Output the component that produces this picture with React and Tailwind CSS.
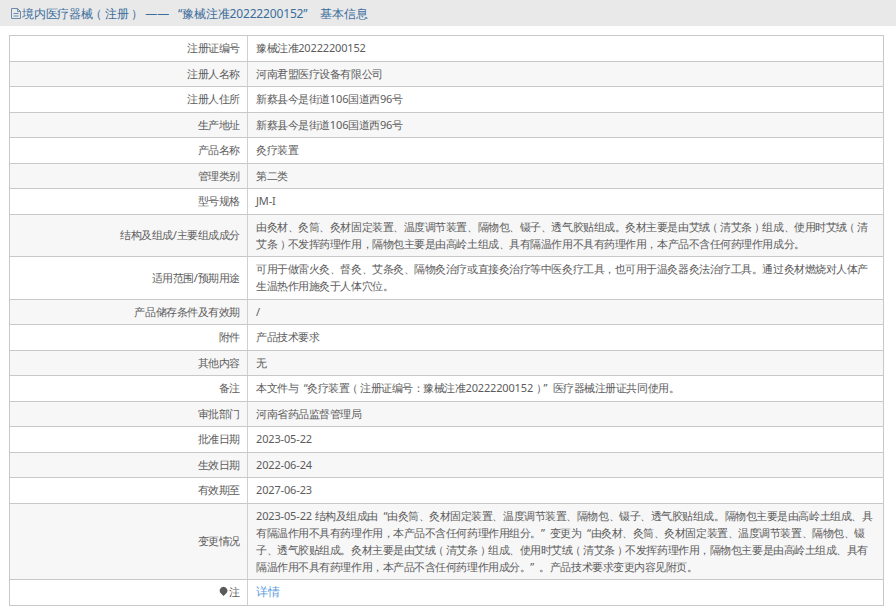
import React from 'react';

const rows = [
  ['注册证编号', ['豫械注准20222200152']],
  ['注册人名称', ['河南君盟医疗设备有限公司']],
  ['注册人住所', ['新蔡县今是街道106国道西96号']],
  ['生产地址', ['新蔡县今是街道106国道西96号']],
  ['产品名称', ['灸疗装置']],
  ['管理类别', ['第二类']],
  ['型号规格', ['JM-I']],
  ['结构及组成/主要组成成分', [
    '由灸材、灸筒、灸材固定装置、温度调节装置、隔物包、镊子、透气胶贴组成。灸材主要是由艾绒（清艾条）组成、使用时艾绒（清',
    '艾条）不发挥药理作用，隔物包主要是由高岭土组成、具有隔温作用不具有药理作用，本产品不含任何药理作用成分。',
  ]],
  ['适用范围/预期用途', [
    '可用于做雷火灸、督灸、艾条灸、隔物灸治疗或直接灸治疗等中医灸疗工具，也可用于温灸器灸法治疗工具。通过灸材燃烧对人体产',
    '生温热作用施灸于人体穴位。',
  ]],
  ['产品储存条件及有效期', ['/']],
  ['附件', ['产品技术要求']],
  ['其他内容', ['无']],
  ['备注', ['本文件与“灸疗装置（注册证编号：豫械注准20222200152）”医疗器械注册证共同使用。']],
  ['审批部门', ['河南省药品监督管理局']],
  ['批准日期', ['2023-05-22']],
  ['生效日期', ['2022-06-24']],
  ['有效期至', ['2027-06-23']],
  ['变更情况', [
    '2023-05-22 结构及组成由“由灸筒、灸材固定装置、温度调节装置、隔物包、镊子、透气胶贴组成。隔物包主要是由高岭土组成、具',
    '有隔温作用不具有药理作用，本产品不含任何药理作用组分。”变更为“由灸材、灸筒、灸材固定装置、温度调节装置、隔物包、镊',
    '子、透气胶贴组成。灸材主要是由艾绒（清艾条）组成、使用时艾绒（清艾条）不发挥药理作用，隔物包主要是由高岭土组成、具有',
    '隔温作用不具有药理作用，本产品不含任何药理作用成分。”。产品技术要求变更内容见附页。',
  ]],
];

// latin runs use a wider face; brackets, commas and quotes sit in a full box like the original
const Txt = ({ children, spacing = '-tracking-[0.45px]' }) =>
  children.split(/([\x20-\x7e]+|[（），“”])/).filter(Boolean).map((part, i) => {
    if (/^[\x20-\x7e]/.test(part)) {
      return <span key={i} className="font-['Open_Sans',sans-serif] tracking-[-0.15px] whitespace-pre">{part}</span>;
    }
    if (part === '（') return <span key={i} className={`inline-block -ml-[0.23em] mr-[0.23em] ${spacing}`}>{part}</span>;
    if (part === '）') return <span key={i} className={`inline-block ml-[0.23em] -mr-[0.23em] ${spacing}`}>{part}</span>;
    if (part === '，') return <span key={i} className={`font-['Noto_Sans_CJK_TC',sans-serif] ${spacing}`}>{part}</span>;
    if (part === '“') return <span key={i} className={`pl-[0.5em] ${spacing}`}>{part}</span>;
    if (part === '”') return <span key={i} className={`pr-[0.5em] ${spacing}`}>{part}</span>;
    return <span key={i} className={spacing}>{part}</span>;
  });

const Row = ({ label, shaded, children }) => (
  <div className={`flex border-b border-[#c8c8c8] ${shaded ? 'bg-[#f7f7f7]' : 'bg-white'}`}>
    <div className="w-[238px] shrink-0 flex items-center justify-end pr-[7px] pt-[3.25px] pb-[4.25px] border-r border-[#d0d0d0]">
      {label}
    </div>
    <div className="flex-1 pl-[8px] pt-[3.25px] pb-[4.25px] flex flex-col justify-center">{children}</div>
  </div>
);

export default function App() {
  return (
    <div className="w-[896px] h-[612px] overflow-hidden bg-white text-[11px] leading-[17px] text-[#5c5c5c] font-['Noto_Sans_CJK_SC',sans-serif]">
      <div className="h-[26px] bg-[#e9e9e9] flex items-center pl-[10px] text-[12px] text-[#3a6d9c]">
        <svg width="12" height="13" viewBox="0 0 12 13" fill="none" stroke="#6b8cab" strokeWidth="1" className="shrink-0">
          <path d="M1.5 1.5h6l3 3v7h-9z" />
          <path d="M7.5 1.5v3h3M3.5 6.5h5M3.5 9h5" />
        </svg>
        <span className="whitespace-nowrap">
          <Txt spacing="-tracking-[0.17px]">境内医疗器械（注册）</Txt>
          <span className="ml-[5px] mr-[3px] -tracking-[0.17px]">——</span>
          <Txt spacing="-tracking-[0.17px]">“豫械注准20222200152”</Txt>
          <span className="ml-[7px]">
            <Txt spacing="-tracking-[0.17px]">基本信息</Txt>
          </span>
        </span>
      </div>
      <div className="mt-[9px] ml-[9px] w-[875px] border-t border-l border-r border-[#c8c8c8]">
        {rows.map(([label, lines], i) => (
          <Row key={label} label={<Txt>{label}</Txt>} shaded={i % 2 === 1}>
            {lines.map((l) => (
              <div key={l} className="whitespace-nowrap"><Txt>{l}</Txt></div>
            ))}
          </Row>
        ))}
        <Row
          shaded={false}
          label={
            <span className="flex items-center">
              <svg width="10" height="11" viewBox="0 0 10 11" className="mr-[1.5px]">
                <path d="M5.5 0.8a3.9 3.9 0 0 1 2.6 6.8L5.5 10 3 7.6A3.9 3.9 0 0 1 5.5.8z" fill="#5a5a5a" />
              </svg>
              <Txt>注</Txt>
            </span>
          }
        >
          <a className="text-[12px] text-[#5a9be0]">详情</a>
        </Row>
      </div>
    </div>
  );
}
